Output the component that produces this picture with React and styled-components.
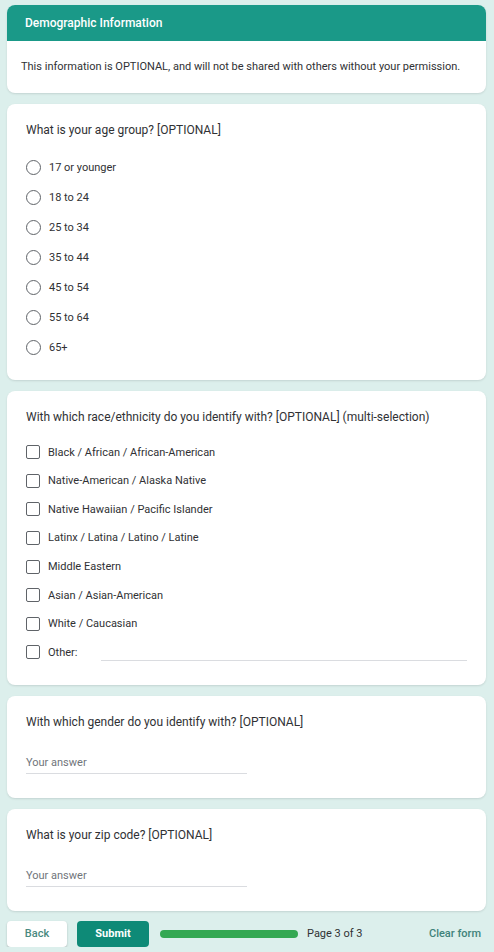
import styled, { createGlobalStyle } from "styled-components";

const GlobalStyle = createGlobalStyle`
  html, body {
    margin: 0;
    padding: 0;
    background: #dcefec;
  }
  body {
    font-family: Roboto, "Noto Sans", Arial, sans-serif;
    color: #202124;
  }
`;

const ageGroups = ["17 or younger", "18 to 24", "25 to 34", "35 to 44", "45 to 54", "55 to 64", "65+"];

const races = [
  "Black / African / African-American",
  "Native-American / Alaska Native",
  "Native Hawaiian / Pacific Islander",
  "Latinx / Latina / Latino / Latine",
  "Middle Eastern",
  "Asian / Asian-American",
  "White / Caucasian",
];

const App = () => {
  return (
    <>
      <GlobalStyle />
      <Page>
        <Card>
          <HeaderBand>Demographic Information</HeaderBand>
          <Description>
            This information is OPTIONAL, and will not be shared with others without your permission.
          </Description>
        </Card>

        <Card>
          <QuestionBody>
            <Question>What is your age group? [OPTIONAL]</Question>
            <OptionList $row={30}>
              {ageGroups.map((a) => (
                <Option key={a}>
                  <Radio />
                  <OptionLabel>{a}</OptionLabel>
                </Option>
              ))}
            </OptionList>
          </QuestionBody>
        </Card>

        <Card>
          <QuestionBody>
            <Question $gap={13}>With which race/ethnicity do you identify with? [OPTIONAL] (multi-selection)</Question>
            <OptionList $row={28.57}>
              {races.map((r) => (
                <Option key={r}>
                  <Checkbox />
                  <OptionLabel>{r}</OptionLabel>
                </Option>
              ))}
              <Option>
                <Checkbox />
                <OptionLabel>Other:</OptionLabel>
                <OtherLine />
              </Option>
            </OptionList>
          </QuestionBody>
        </Card>

        <Card>
          <QuestionBody $bottom={24}>
            <Question $gap={26}>With which gender do you identify with? [OPTIONAL]</Question>
            <AnswerField>Your answer</AnswerField>
          </QuestionBody>
        </Card>

        <Card>
          <QuestionBody $bottom={24}>
            <Question $gap={26}>What is your zip code? [OPTIONAL]</Question>
            <AnswerField>Your answer</AnswerField>
          </QuestionBody>
        </Card>

        <Footer>
          <BackButton>Back</BackButton>
          <SubmitButton>Submit</SubmitButton>
          <Progress>
            <ProgressFill />
          </Progress>
          <PageLabel>Page 3 of 3</PageLabel>
          <ClearLink>Clear form</ClearLink>
        </Footer>
      </Page>
    </>
  );
};

export default App;

const Page = styled.div`
  width: 479px;
  padding: 5px 0 0 7px;
  display: flex;
  flex-direction: column;
  gap: 11px;
`;

const Card = styled.div`
  background: #fff;
  border-radius: 8px;
  overflow: hidden;
  box-shadow: 0 1px 2px rgba(60, 64, 67, 0.15);
`;

const HeaderBand = styled.div`
  background: #1a9988;
  color: #fff;
  height: 36px;
  display: flex;
  align-items: center;
  padding-left: 18px;
  font-size: 12px;
  font-weight: 500;
`;

const Description = styled.div`
  padding: 18px 14px 19px;
  font-size: 11px;
  line-height: 15px;
  color: #303134;
`;

const QuestionBody = styled.div`
  padding: 18px 19px ${({ $bottom }) => ($bottom ?? 18)}px;
`;

const Question = styled.div`
  font-size: 12px;
  line-height: 16px;
  color: #303134;
  margin-bottom: ${({ $gap }) => ($gap ?? 14)}px;
`;

const OptionList = styled.div`
  display: flex;
  flex-direction: column;
  & > div {
    height: ${({ $row }) => $row}px;
  }
`;

const Option = styled.div`
  display: flex;
  align-items: center;
`;

const Radio = styled.span`
  width: 13px;
  height: 13px;
  border: 1.5px solid #5f6368;
  border-radius: 50%;
  flex-shrink: 0;
`;

const Checkbox = styled.span`
  width: 12px;
  height: 12px;
  border: 1.5px solid #5f6368;
  border-radius: 2px;
  flex-shrink: 0;
`;

const OptionLabel = styled.span`
  font-size: 11px;
  color: #303134;
  margin-left: 8px;
`;

const OtherLine = styled.span`
  flex: 1;
  align-self: flex-end;
  margin: 0 0 6px 24px;
  border-bottom: 1px solid #dadce0;
`;

const AnswerField = styled.div`
  width: 221px;
  height: 13px;
  line-height: 13px;
  padding-bottom: 4px;
  border-bottom: 1px solid #dadce0;
  font-size: 11px;
  color: #70757a;
`;

const Footer = styled.div`
  display: flex;
  align-items: center;
  height: 26px;
  margin-top: -1px;
  padding-right: 5px;
`;

const BackButton = styled.div`
  width: 60px;
  height: 26px;
  background: #fff;
  border-radius: 4px;
  box-shadow: 0 1px 2px rgba(60, 64, 67, 0.3);
  color: #4a8a80;
  font-size: 11px;
  font-weight: 500;
  display: flex;
  align-items: center;
  justify-content: center;
`;

const SubmitButton = styled.div`
  width: 72px;
  height: 26px;
  margin-left: 10px;
  background: #0e8a77;
  border-radius: 4px;
  color: #fff;
  font-size: 11px;
  font-weight: 700;
  display: flex;
  align-items: center;
  justify-content: center;
`;

const Progress = styled.div`
  width: 138px;
  height: 8px;
  margin-left: 11px;
  border-radius: 4px;
  background: #e0e0e0;
  overflow: hidden;
`;

const ProgressFill = styled.div`
  width: 100%;
  height: 100%;
  background: #34a853;
`;

const PageLabel = styled.span`
  margin-left: 9px;
  font-size: 11px;
  color: #303134;
`;

const ClearLink = styled.span`
  margin-left: auto;
  font-size: 11px;
  font-weight: 500;
  color: #3f837a;
`;
